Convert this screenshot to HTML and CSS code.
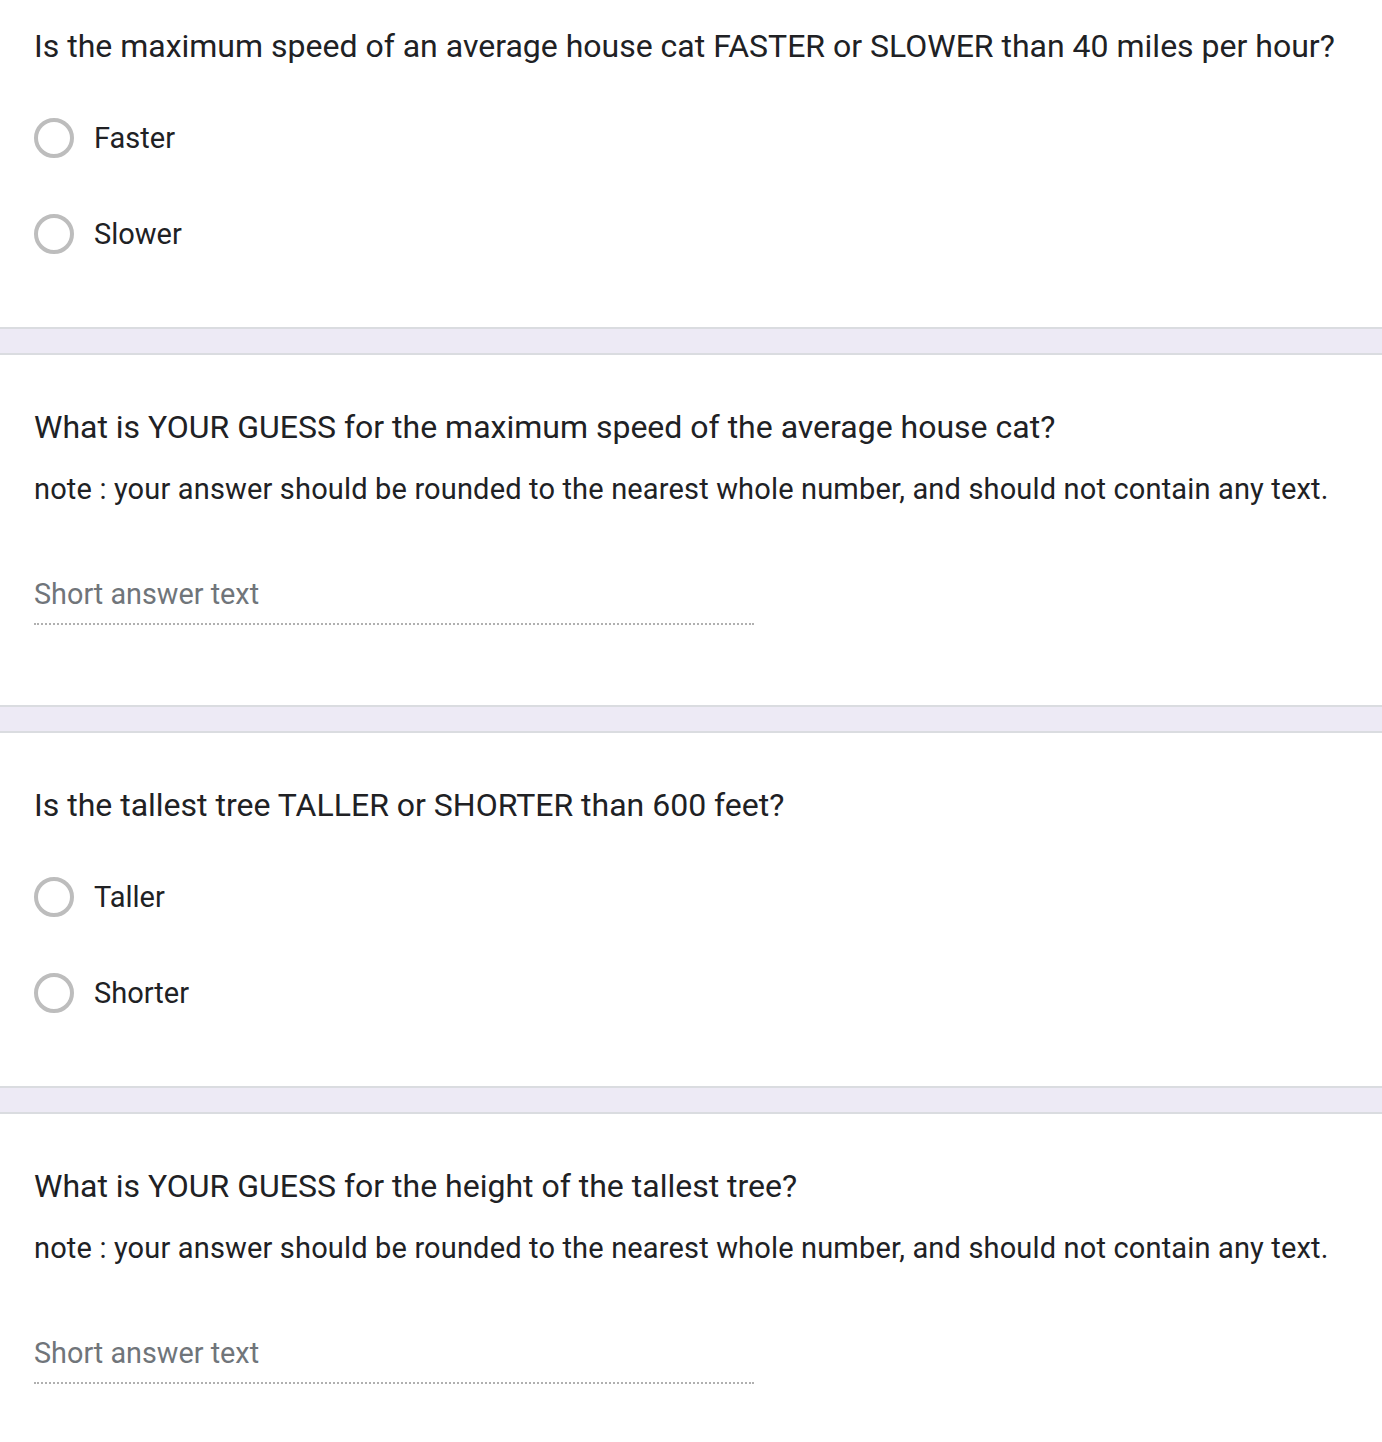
FILE: index.html
```html
<!DOCTYPE html>
<html>
<head>
<meta charset="utf-8">
<link rel="stylesheet" href="styles.css">
</head>
<body>
<div class="form">
  <section class="card card-first">
    <div class="question">Is the maximum speed of an average house cat FASTER or SLOWER than 40 miles per hour?</div>
    <div class="options">
      <div class="option"><span class="radio"></span><span class="label">Faster</span></div>
      <div class="option"><span class="radio"></span><span class="label">Slower</span></div>
    </div>
  </section>
  <div class="gap"></div>
  <section class="card card-text">
    <div class="question">What is YOUR GUESS for the maximum speed of the average house cat?</div>
    <div class="note">note : your answer should be rounded to the nearest whole number, and should not contain any text.</div>
    <div class="answer"><span class="placeholder">Short answer text</span></div>
  </section>
  <div class="gap"></div>
  <section class="card">
    <div class="question">Is the tallest tree TALLER or SHORTER than 600 feet?</div>
    <div class="options">
      <div class="option"><span class="radio"></span><span class="label">Taller</span></div>
      <div class="option"><span class="radio"></span><span class="label">Shorter</span></div>
    </div>
  </section>
  <div class="gap"></div>
  <section class="card card-text">
    <div class="question">What is YOUR GUESS for the height of the tallest tree?</div>
    <div class="note">note : your answer should be rounded to the nearest whole number, and should not contain any text.</div>
    <div class="answer"><span class="placeholder">Short answer text</span></div>
  </section>
</div>
</body>
</html>
```

FILE: styles.css
```css
html, body {
  margin: 0;
  padding: 0;
  background: #ffffff;
}
body {
  font-family: Roboto, "Liberation Sans", Arial, sans-serif;
  color: #202124;
}
.form {
  display: flex;
  flex-direction: column;
}
.card {
  background: #ffffff;
  padding: 48px 34px 45px 34px;
}
.card-first {
  padding-top: 22px;
}
.card-text {
  padding-bottom: 80px;
}
.gap {
  height: 24px;
  background: #edeaf5;
  border-top: 2px solid #dadce0;
  border-bottom: 2px solid #dadce0;
}
.question {
  font-size: 32px;
  line-height: 48px;
}
.options {
  margin-top: 20px;
  display: flex;
  flex-direction: column;
}
.option {
  height: 96px;
  display: flex;
  align-items: center;
}
.radio {
  width: 40px;
  height: 40px;
  box-sizing: border-box;
  border: 4px solid #bdbdbd;
  border-radius: 50%;
  flex: none;
}
.label {
  margin-left: 20px;
  font-size: 29px;
  line-height: 40px;
}
.note {
  margin-top: 18px;
  font-size: 29px;
  letter-spacing: 0.16px;
  line-height: 40px;
}
.answer {
  margin-top: 65px;
  width: 720px;
  padding-bottom: 9px;
  border-bottom: 2px dotted #b0b0b0;
}
.placeholder {
  display: block;
  font-size: 28.8px;
  line-height: 40px;
  color: #70757a;
}
```
